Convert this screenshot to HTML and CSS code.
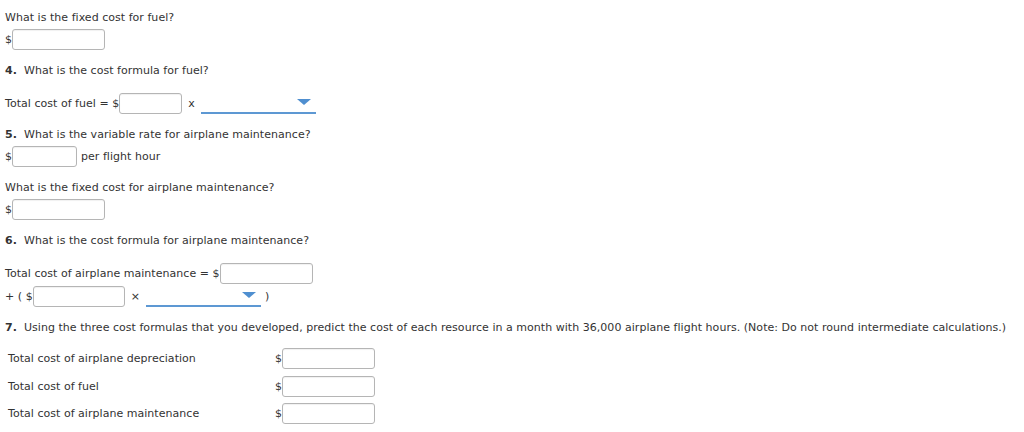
FILE: index.html
```html
<!DOCTYPE html>
<html>
<head>
<meta charset="utf-8">
<link rel="stylesheet" href="styles.css">
</head>
<body>
<div class="page">
  <p class="txt first">What is the fixed cost for fuel?</p>
  <div class="row r-tight"><span class="cur">$</span><span class="inp w93"></span></div>

  <p class="txt sec"><b>4.</b>&nbsp; What is the cost formula for fuel?</p>
  <div class="row r-form">
    <span>Total cost of fuel = $</span><span class="inp w63"></span>
    <span class="mul">x</span>
    <span class="dd w115"><span class="tri"></span></span>
  </div>

  <p class="txt sec"><b>5.</b>&nbsp; What is the variable rate for airplane maintenance?</p>
  <div class="row r-tight"><span class="cur">$</span><span class="inp w65"></span><span class="after">per flight hour</span></div>

  <p class="txt sec">What is the fixed cost for airplane maintenance?</p>
  <div class="row r-tight"><span class="cur">$</span><span class="inp w93"></span></div>

  <p class="txt sec"><b>6.</b>&nbsp; What is the cost formula for airplane maintenance?</p>
  <div class="row r-form">
    <span>Total cost of airplane maintenance = $</span><span class="inp w93"></span>
  </div>
  <div class="row r-plus">
    <span>+ ( $</span><span class="inp w92"></span>
    <span class="mul2">×</span>
    <span class="dd w115"><span class="tri"></span></span>
    <span class="paren">)</span>
  </div>

  <p class="txt sec"><b>7.</b>&nbsp; Using the three cost formulas that you developed, predict the cost of each resource in a month with 36,000 airplane flight hours. (Note: Do not round intermediate calculations.)</p>
  <div class="tbl">
    <div class="trow"><span class="lbl">Total cost of airplane depreciation</span><span class="cur">$</span><span class="inp w93"></span></div>
    <div class="trow"><span class="lbl">Total cost of fuel</span><span class="cur">$</span><span class="inp w93"></span></div>
    <div class="trow"><span class="lbl">Total cost of airplane maintenance</span><span class="cur">$</span><span class="inp w93"></span></div>
  </div>
</div>
</body>
</html>
```

FILE: styles.css
```css
html, body {
  margin: 0;
  padding: 0;
  background: #fff;
}
.page {
  padding: 10px 0 0 5px;
  font-family: "DejaVu Sans", Verdana, sans-serif;
  font-size: 11px;
  letter-spacing: 0.035px;
  color: #333;
}
.txt {
  margin: 0;
  line-height: 16px;
  height: 16px;
  white-space: nowrap;
}
.txt b {
  font-weight: bold;
}
.sec {
  margin-top: 13px;
}
.row {
  display: flex;
  align-items: center;
  white-space: nowrap;
}
.r-tight {
  margin-top: 3px;
  height: 21px;
}
.r-form {
  margin-top: 14px;
  height: 21px;
}
.r-plus {
  margin-top: 2px;
  height: 21px;
}
.cur {
  width: 7px;
}
.inp {
  display: inline-block;
  box-sizing: border-box;
  height: 21px;
  border: 1px solid #b5b5b5;
  border-radius: 3px;
  box-shadow: inset 0 1px 1px rgba(0,0,0,0.06);
  background: #fff;
}
.w93 { width: 93px; }
.w92 { width: 92px; }
.w65 { width: 65px; }
.w63 { width: 63px; }
.after {
  margin-left: 4px;
}
.mul {
  margin-left: 6px;
}
.mul2 {
  margin-left: 6px;
}
.dd {
  position: relative;
  display: inline-block;
  box-sizing: border-box;
  height: 21px;
  margin-left: 6px;
  align-self: flex-start;
  border-bottom: 2px solid #5d98d3;
}
.w115 { width: 115px; }
.tri {
  position: absolute;
  right: 5px;
  top: 6px;
  width: 0;
  height: 0;
  border-left: 7px solid transparent;
  border-right: 7px solid transparent;
  border-top: 6px solid #4f8fd0;
}
.paren {
  margin-left: 4px;
}
.tbl {
  margin-top: 12px;
  padding-left: 3px;
}
.trow {
  display: flex;
  align-items: center;
  height: 21px;
  margin-bottom: 6.5px;
}
.lbl {
  width: 267px;
}
```
